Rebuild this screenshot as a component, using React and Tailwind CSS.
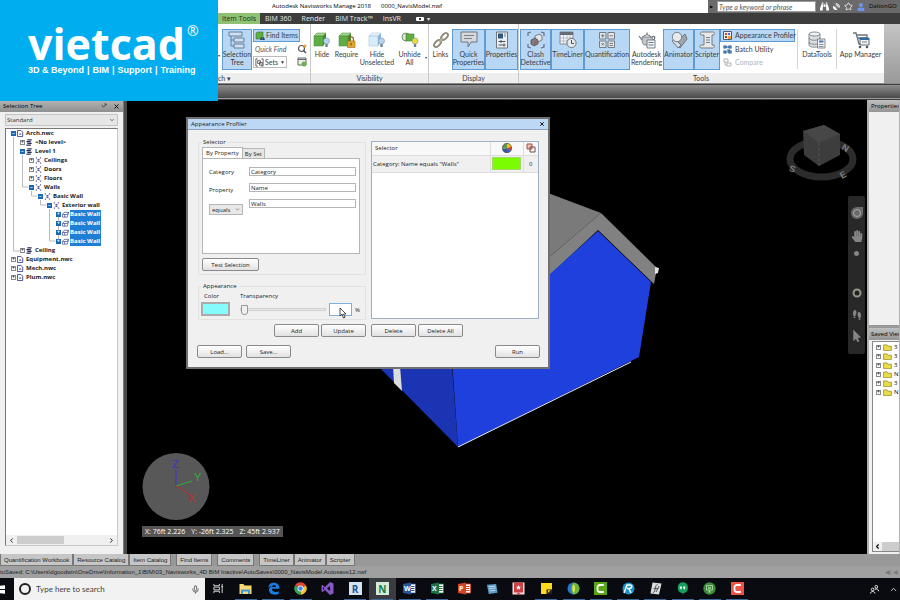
import React from "react";
import { ChevronDown, ChevronLeft, ChevronRight, ChevronUp, Mic, Star, X } from "lucide-react";
import { FaBinoculars, FaHandPaper, FaMousePointer, FaSatelliteDish, FaShoePrints, FaUser } from "react-icons/fa";

/* ---------- ribbon icons ---------- */

const Cube = ({ fill = "#5fae45", top = "#a4d98a", side = "#3f8530", children }) => (
  <svg viewBox="0 0 18 18" className="h-[18px] w-[18px]">
    <path d="M1 5l3-3h9l-3 3z" fill={top} stroke={side} strokeWidth=".5" />
    <path d="M10 5l3-3v9l-3 4z" fill={side} />
    <path d="M1 5h9v10H1z" fill={fill} stroke={side} strokeWidth=".5" />
    {children}
  </svg>
);

const Bulb = ({ x = 13.5, color = "#b5d4ee" }) => (
  <g>
    <circle cx={x} cy="10" r="3" fill={color} stroke="#7d93a8" strokeWidth=".6" />
    <path d={`M${x - 1.2} 13h2.4v3h-2.4z`} fill="#71808f" />
  </g>
);

const icons = {
  tree: (
    <svg viewBox="0 0 18 18" className="h-[18px] w-[18px]" fill="#cfdfee" stroke="#5c7690" strokeWidth=".9">
      <path d="M1 1h13v4H1zM6 7h10v4H6zM6 13h10v4H6z" />
      <path d="M3 5v10h3M3 9h3" fill="none" />
    </svg>
  ),
  hide: <Cube><Bulb /></Cube>,
  require: (
    <Cube>
      <path d="M11 10V8a2.200 2.200 0 0 1 4.400 0v2" fill="none" stroke="#8a6a1e" strokeWidth="1.200" />
      <path d="M9.500 10h7.500v6.500H9.500z" fill="#e3a532" stroke="#9a6c16" strokeWidth=".6" />
      <path d="M13 12v2.500" stroke="#5d4210" />
    </Cube>
  ),
  hideUn: <Cube fill="#d9ecfa" top="#eef7fd" side="#8fb8d8"><Bulb /></Cube>,
  unhide: (
    <svg viewBox="0 0 18 18" className="h-[18px] w-[18px]">
      <circle cx="5" cy="6" r="4" fill="#dfe7dc" stroke="#77916d" />
      <path d="M5 3h8v7H5z" fill="#5fae45" stroke="#3f8530" strokeWidth=".6" />
      <Bulb x={14} color="#f4d93c" />
    </svg>
  ),
  links: (
    <svg viewBox="0 0 18 18" className="h-[18px] w-[18px]" fill="none" stroke="#8b8371" strokeWidth="1.800">
      <ellipse cx="12.500" cy="5.500" rx="2.400" ry="4.200" transform="rotate(45 12.500 5.500)" />
      <ellipse cx="5.500" cy="12.500" rx="2.400" ry="4.200" transform="rotate(45 5.500 12.500)" />
      <path d="M7 11l4-4" stroke="#b9b19f" />
    </svg>
  ),
  quick: (
    <svg viewBox="0 0 18 18" className="h-[18px] w-[18px]">
      <path d="M1 1h16v10h-6l-3 5v-5H1z" fill="#d5d9de" stroke="#6f7680" />
      <path d="M4 4.500h10M4 7.500h8" stroke="#7b828c" />
    </svg>
  ),
  props: (
    <svg viewBox="0 0 18 18" className="h-[18px] w-[18px]">
      <path d="M3.500 1h11v16h-11z" fill="#eef1f4" stroke="#6f7680" />
      <path d="M5 2.500h5v5H5z" fill="#31577f" />
      <path d="M11 3h2M11 5h2" stroke="#7b828c" />
      <path d="M5.500 10.500h7M5.500 14h7M8 9v3M11 12.500v3" stroke="#4a525c" />
    </svg>
  ),
  clash: (
    <svg viewBox="0 0 18 18" className="h-[18px] w-[18px]">
      <path d="M1 5V2l3-1M14 1l3 1v3M1 13v3l3 1M14 17l3-1v-3" fill="none" stroke="#5f7184" strokeWidth="1.200" />
      <path d="M8 5l4-2 3 2v4l-4 2-3-2z" fill="#e4e6e8" stroke="#555" strokeWidth=".7" />
      <path d="M4 9l4-2 3 2v4l-4 2-3-2z" fill="#807c80" stroke="#444" strokeWidth=".7" />
      <path d="M7 11l4-2v4l-4 2z" fill="#8a6a68" />
    </svg>
  ),
  time: (
    <svg viewBox="0 0 18 18" className="h-[18px] w-[18px]">
      <path d="M1 1h13v12H1z" fill="#f2f4f6" stroke="#6f7680" strokeWidth=".8" />
      <path d="M1 1h13v3H1z" fill="#636c77" />
      <path d="M1 7h13M1 10h13M4.500 4v9M8 4v9M11 4v9" stroke="#9aa2ab" strokeWidth=".6" />
      <circle cx="12.500" cy="12" r="4.600" fill="#e6e9ec" stroke="#6f7680" />
      <path d="M12.500 9v3.500h2.500" fill="none" stroke="#4a525c" />
    </svg>
  ),
  quant: (
    <svg viewBox="0 0 18 18" className="h-[18px] w-[18px]" fill="#e3e6e9" stroke="#6b727b" strokeWidth=".9">
      <path d="M1.500 1.500h6.500v6.500H1.500zM10 1.500h6.500v6.500H10zM1.500 10h6.500v6.500H1.500zM10 10h6.500v6.500H10z" />
      <path d="M3 4.800h3.500M4.800 3v3.500M11.500 4.800h3.500M3.500 12l2.500 2.500M6 12l-2.500 2.500M11.500 12.500h3.500M11.500 14.500h3.500" />
    </svg>
  ),
  teapot: (
    <svg viewBox="0 0 18 18" className="h-[18px] w-[18px]">
      <path d="M4 6c0 7 1 8 4 8h3c3 0 4-3 3-8z" fill="#c3c6c9" stroke="#6b727b" strokeWidth=".8" />
      <path d="M5 6c2-3 6-3 8 0M9 3.500V1.500M4 9L1 5M14 6c3-2 4 1 1 4" fill="none" stroke="#6b727b" strokeWidth="1.200" />
      <path d="M9 9h8v8H9z" fill="#eef0f2" stroke="#5d646d" strokeWidth=".8" />
      <path d="M10.500 11.500h5M10.500 14h5" stroke="#77808a" />
    </svg>
  ),
  animator: (
    <svg viewBox="0 0 18 18" className="h-[18px] w-[18px]">
      <path d="M7 11l8-8 2 5-7 9z" fill="#9da5ae" stroke="#59616b" strokeWidth=".8" />
      <path d="M2 10l6 7 3-3-6-6z" fill="#d7dbe0" stroke="#59616b" strokeWidth=".8" />
      <circle cx="7" cy="6" r="4.700" fill="#e8eaed" stroke="#747c86" />
    </svg>
  ),
  scripter: (
    <svg viewBox="0 0 18 18" className="h-[18px] w-[18px]" fill="#e6e8ea" stroke="#6b727b" strokeWidth=".9">
      <path d="M4 1h11c2 0 2 3 0 3h-1v10h2c1 3-1 3-2 3H4c-3 0-3-3 0-3h2V4H4C1 4 2 1 4 1z" />
      <path d="M8 6.500h4M8 9h4M8 11.500h4" />
    </svg>
  ),
  data: (
    <svg viewBox="0 0 18 18" className="h-[18px] w-[18px]" stroke="#6b727b" strokeWidth=".8">
      <path d="M1 3v11c0 3 11 3 11 0V3" fill="#dcdfe2" />
      <ellipse cx="6.500" cy="3" rx="5.500" ry="2" fill="#eff1f3" />
      <path d="M1 7c0 3 11 3 11 0M1 11c0 3 11 3 11 0" fill="none" />
      <path d="M9.500 8h7.500v9H9.500z" fill="#f2f4f5" />
      <path d="M11 9.500h4.500v2H11z" fill="#4c7ba8" stroke="none" />
      <path d="M11 13.500h4.500M11 15.500h4.500" />
    </svg>
  ),
  app: (
    <svg viewBox="0 0 18 18" className="h-[18px] w-[18px]">
      <path d="M1 2h3l3 11h9M5 4h10v3H6" fill="none" stroke="#6b727b" strokeWidth="1.300" />
      <path d="M8 7h9v7H8z" fill="#f2f4f5" stroke="#3d4650" strokeWidth=".8" />
      <path d="M8 7h9v2H8z" fill="#2e6ca8" />
      <path d="M10 11h5" stroke="#77808a" />
      <circle cx="8" cy="16" r="1.300" fill="#555" />
      <circle cx="15" cy="16" r="1.300" fill="#555" />
    </svg>
  ),
};

const MiniCube = () => (
  <svg viewBox="0 0 10 10" className="h-[10px] w-[10px] shrink-0">
    <path d="M1 2l2-1h5v5l-2 2H1z" fill="#5fae45" stroke="#3f7030" strokeWidth=".6" />
    <path d="M5 9l1-3h1l.5 2L8 6h1l1 3z" fill="#35506e" />
  </svg>
);

const Big = ({ icon, lines, active, w }) => (
  <button
    className={`flex h-[41px] shrink-0 flex-col items-center border pt-px text-[7px] leading-[8px] ${w} ${
      active ? "border-[#5f9bd3] bg-[#b7d7f5]" : "border-transparent"
    }`}
  >
    {icons[icon]}
    <span className="mt-px flex flex-col whitespace-nowrap font-[Lato,sans-serif]">
      {lines.map((l) => (
        <span key={l}>{l}</span>
      ))}
    </span>
  </button>
);

const Group = ({ label, className = "", children }) => (
  <div className={`flex flex-col border-r border-[#c9c9c9] ${className}`}>
    <div className="flex h-[49px] items-start pt-[5px]">{children}</div>
    <div className="flex h-[10px] items-center justify-center bg-[#eeeeee] text-[7px] leading-none font-[Lato,sans-serif]">{label}</div>
  </div>
);

const tabs = ["BIM 360", "Render", "BIM Track™", "InsVR"];

const Ribbon = () => (
  <header className="h-[100px] shrink-0 bg-[#3d3d3d] text-[#3c3c3c]">
    <div className="flex h-[13px] items-center pl-[218px]">
      <div className="flex h-full w-[490px] items-center gap-[10px] bg-white pl-[54px] text-[6px] text-black">
        <span>Autodesk Navisworks Manage 2018</span>
        <span>0000_NavisModel.nwf</span>
      </div>
      <div className="flex h-full flex-1 items-center gap-[4px] overflow-hidden bg-[#6a6a6a] text-[6px] whitespace-nowrap text-white">
        <span className="ml-[2px] text-[4px] text-black">▶</span>
        <input
          aria-label="Search help"
          placeholder="Type a keyword or phrase"
          className="h-[11px] w-[99px] shrink-0 border border-[#999] bg-white px-px text-[7px] font-[Lato,sans-serif] italic leading-none placeholder:text-[#555]"
        />
        <FaBinoculars className="size-[9px] shrink-0" />
        <FaSatelliteDish className="size-[7px] shrink-0" />
        <Star className="size-[9px] shrink-0" />
        <FaUser className="size-[8px] shrink-0 text-[#6f93f0]" />
        <span className="text-black">DaltonGO</span>
      </div>
    </div>

    <nav className="flex h-[11px] items-center pl-[218px] text-[7px] leading-none text-[#e8e8e8]">
      <button className="h-full w-[42px] bg-[#8fc172] text-center whitespace-nowrap text-[#1e2b18]">Item Tools</button>
      <div className="ml-[5px] flex items-center gap-[10px]">
        {tabs.map((t) => (
          <button key={t}>{t}</button>
        ))}
      </div>
      <button aria-label="Ribbon display" className="ml-[15px] flex items-center gap-[3px] text-[6px]">
        <span className="flex h-[4px] w-[8px] items-center justify-center rounded-[1px] bg-white">
          <span className="size-[2px] bg-[#333]" />
        </span>
        ▾
      </button>
    </nav>

    <div className="flex h-[60px] border-b border-[#8b8b8b] bg-white pl-[218px]">
      <Group
        className="w-[93px] shrink-0"
        label={<span className="mr-auto">ch ▾</span>}
      >
        <span className="mt-[24px] w-[4px] shrink-0 text-[4px]">▾</span>
        <Big icon="tree" lines={["Selection", "Tree"]} active w="w-[30px]" />
        <div className="ml-px flex flex-1 flex-col text-[7px] leading-none font-[Lato,sans-serif]">
          <button className="flex h-[13px] w-[47px] items-center gap-px border border-[#5f9bd3] bg-[#b7d7f5] px-px whitespace-nowrap">
            <MiniCube /> Find Items
          </button>
          <div className="flex h-[14px] items-center justify-between pr-[3px]">
            <input
              aria-label="Quick Find"
              placeholder="Quick Find"
              className="w-[40px] px-[2px] italic placeholder:text-[#555]"
            />
            <svg viewBox="0 0 10 10" className="size-[10px]">
              <circle cx="4.500" cy="4.500" r="3" fill="#fff" stroke="#555" strokeWidth="1.200" />
              <path d="M6.500 6.500L9 9" stroke="#555" strokeWidth="1.500" />
              <circle cx="8" cy="2" r="1.500" fill="#f0a030" />
            </svg>
          </div>
          <div className="flex items-center justify-between pr-[3px]">
            <button className="flex h-[12px] w-[34px] items-center gap-px border border-[#bbb] px-px">
              <svg viewBox="0 0 10 10" className="size-[9px]" fill="none" stroke="#555">
                <path d="M3 1H1v8h2M7 1h2v8H7M3 3h3v3H3zM5 5h3v3H5z" />
              </svg>
              Sets
              <span className="ml-auto text-[5px]">▼</span>
            </button>
            <svg viewBox="0 0 10 10" className="size-[10px]">
              <path d="M1 1h8v7H1z" fill="#eee" stroke="#666" />
              <path d="M1 2.500h8" stroke="#666" />
              <circle cx="7" cy="7" r="2.500" fill="#6ab04c" />
            </svg>
          </div>
        </div>
      </Group>

      <Group className="w-[118px] shrink-0" label="Visibility">
        <Big icon="hide" lines={["Hide"]} w="w-[22px]" />
        <Big icon="require" lines={["Require"]} w="w-[27px]" />
        <Big icon="hideUn" lines={["Hide", "Unselected"]} w="w-[34px]" />
        <Big icon="unhide" lines={["Unhide", "All"]} w="w-[31px]" />
        <span className="mt-[26px] text-[4px]">▾</span>
      </Group>

      <Group className="w-[90px] shrink-0" label="Display">
        <Big icon="links" lines={["Links"]} w="w-[23px]" />
        <Big icon="quick" lines={["Quick", "Properties"]} active w="w-[33px]" />
        <Big icon="props" lines={["Properties"]} active w="w-[33px]" />
      </Group>

      <Group className="w-[365px] shrink-0 border-r-0" label={<span className="mr-px">Tools</span>}>
        <span className="w-px" />
        <Big icon="clash" lines={["Clash", "Detective"]} active w="w-[31px]" />
        <Big icon="time" lines={["TimeLiner"]} active w="w-[33px]" />
        <Big icon="quant" lines={["Quantification"]} active w="w-[46px]" />
        <Big icon="teapot" lines={["Autodesk", "Rendering"]} w="w-[33px]" />
        <Big icon="animator" lines={["Animator"]} active w="w-[31px]" />
        <Big icon="scripter" lines={["Scripter"]} active w="w-[26px]" />
        <div className="flex w-[78px] shrink-0 flex-col items-start border-r border-[#d5d5d5] text-[7px] leading-none font-[Lato,sans-serif] whitespace-nowrap">
          <button className="flex h-[13px] w-[75px] items-center gap-[3px] border border-[#5f9bd3] bg-[#b7d7f5] px-[2px]">
            <svg viewBox="0 0 9 9" className="size-[9px] shrink-0">
              <path d="M.5 .5h8v8h-8z" fill="#eee" stroke="#4e5a78" />
              <path d="M2 2h2v2H2z" fill="#d8442c" />
              <path d="M5 2h2v2H5z" fill="#3e78c8" />
              <path d="M2 5h2v2H2z" fill="#8a4a3a" />
              <path d="M5 5h3v3H5z" fill="#f0a030" />
            </svg>
            Appearance Profiler
          </button>
          <button className="flex h-[14px] items-center gap-[3px] px-[3px]">
            <svg viewBox="0 0 9 9" className="size-[9px]" fill="none" stroke="#1f5b96" strokeWidth="1.200">
              <path d="M1 1h2v2H1zM1 6h2v2H1zM6 1h2v2H6zM6 6h2v2H6zM3 2h3M4 7h2M4 5h3" />
            </svg>
            Batch Utility
          </button>
          <button disabled className="flex h-[13px] items-center gap-[3px] px-[3px] text-[#b4b4b4]">
            <svg viewBox="0 0 9 9" className="size-[9px]" fill="none" stroke="#b4b4b4">
              <path d="M1 1h4v3H1zM4 5h4v3H4zM2 4v3h2" />
            </svg>
            Compare
          </button>
        </div>
        <Big icon="data" lines={["DataTools"]} w="w-[38px]" />
        <span className="h-[40px] border-r border-[#d5d5d5]" />
        <Big icon="app" lines={["App Manager"]} w="w-[47px]" />
      </Group>
      <div className="flex-1 bg-gradient-to-b from-[#c4c4c4] to-[#9a9a9a]" />
    </div>
    <div className="mt-px h-[13px] bg-gradient-to-b from-[#8e8e8e] to-[#4a4a4a]" />
    <div className="h-px bg-[#9a9a9a]" />
  </header>
);

/* ---------- selection tree ---------- */

const rows = [
  { d: 0, t: "Arch.nwc", k: "file", open: true },
  { d: 1, t: "<No level>", k: "layer" },
  { d: 1, t: "Level 1", k: "layer", open: true },
  { d: 2, t: "Ceilings", k: "set" },
  { d: 2, t: "Doors", k: "set" },
  { d: 2, t: "Floors", k: "set" },
  { d: 2, t: "Walls", k: "set", open: true },
  { d: 3, t: "Basic Wall", k: "set", open: true },
  { d: 4, t: "Exterior wall", k: "set", open: true },
  { d: 5, t: "Basic Wall", k: "wall", sel: true },
  { d: 5, t: "Basic Wall", k: "wall", sel: true },
  { d: 5, t: "Basic Wall", k: "wall", sel: true },
  { d: 5, t: "Basic Wall", k: "wall", sel: true },
  { d: 1, t: "Ceiling", k: "layer" },
  { d: 0, t: "Equipment.nwc", k: "file" },
  { d: 0, t: "Mech.nwc", k: "file" },
  { d: 0, t: "Plum.nwc", k: "file" },
];

const treeIcons = {
  file: (
    <>
      <path d="M.5 .5h4l2 2v5h-6z" fill="#fff" stroke="#3b3b8c" />
      <path d="M2 5.500c1-3 3-2 3 0z" fill="#6a6ab8" />
    </>
  ),
  layer: <path d="M1.500 1h5M.5 3h5M1.500 5h5M.5 7h5" stroke="#2c2c5c" strokeWidth="1.200" />,
  set: (
    <>
      <path d="M1 1h1M6 1h1M3 3h2M3 5h2M1 7h1M6 7h1" stroke="#33337c" strokeWidth="1.500" />
      <path d="M1 1l5 6M6 1L1 7" stroke="#9a9ac8" strokeWidth=".5" />
    </>
  ),
  wall: <path d="M.5 4l2-2.500h5L6 7H.5zM.5 4H6l1.500-2.500M3 4v3" fill="#fff" stroke="#44448c" strokeWidth=".8" />,
};

const guideX = [8, 17, 26, 35, 44, 53];

const SelectionTree = () => (
  <aside className="flex w-[124px] shrink-0 flex-col border-r border-[#777] bg-[#f0f0f0]">
    <div className="flex h-[12px] items-center justify-between bg-gradient-to-b from-[#b5b5b5] to-[#8f8f8f] px-[3px] text-[6px] text-black">
      <span>Selection Tree</span>
      <span className="flex items-center gap-[6px]">
        <svg viewBox="0 0 7 7" className="size-[6px]" fill="none" stroke="#444">
          <path d="M1 2l2 3 3-4M4 1h2v2" />
        </svg>
        <X className="size-[7px]" strokeWidth={3} />
      </span>
    </div>
    <div className="mx-[5px] mt-[2px] flex h-[12px] items-center border border-[#c4c4c4] bg-[#e6e6e6]">
      <select aria-label="Tree mode" className="w-full appearance-none px-px text-[6px] leading-none text-[#333]">
        <option>Standard</option>
      </select>
      <ChevronDown className="mr-[2px] size-[6px] shrink-0" />
    </div>
    <div className="mx-[5px] mt-[2px] mb-[8px] flex flex-1 flex-col border border-[#c9c9c9] border-t-[#777] border-l-[#777] bg-white">
      <ul className="relative flex-1 text-[6px] font-bold leading-[9px] text-[#222]">
        <svg className="absolute top-0 left-0 h-[160px] w-[80px]" fill="none" stroke="#bbb">
          <path d="M7.500 8v114h6M16.500 26v32h6M25.500 62v5h6M34.500 71v5h6M43.500 80v32h6M52.500 84v28" />
        </svg>
        {rows.map((r, i) => (
          <li key={i} className="relative flex items-center">
            <span className="shrink-0" style={{ width: guideX[r.d] - 3 }} />
            <span
              className={`flex size-[5px] shrink-0 items-center justify-center border text-[5px] leading-none ${
                r.open || r.sel ? "border-[#1768b5] bg-[#1768b5] text-white" : "border-[#888] bg-white"
              }`}
            >
              {r.open ? "−" : "+"}
            </span>
            <svg viewBox="0 0 8 8" className="mx-px size-[7px] shrink-0">
              {treeIcons[r.k]}
            </svg>
            <span className={r.sel ? "bg-[#1f7fd6] pr-px text-white" : "pl-px"}>{r.t}</span>
          </li>
        ))}
      </ul>
      <div className="flex h-[10px] items-center bg-[#f0f0f0]">
        <ChevronLeft className="mx-[2px] size-[7px]" strokeWidth={3} />
        <span className="h-[8px] w-[47px] bg-[#cdcdcd]" />
        <ChevronRight className="mr-[2px] ml-auto size-[7px]" strokeWidth={3} />
      </div>
    </div>
  </aside>
);

/* ---------- appearance profiler window ---------- */

const Btn = ({ children, className = "w-[45px]" }) => (
  <button
    className={`h-[13px] rounded-[2px] border border-[#8a8a8a] bg-gradient-to-b from-white to-[#e2e2e2] text-[6px] leading-none ${className}`}
  >
    {children}
  </button>
);

const Field = ({ label, value }) => (
  <input aria-label={label} defaultValue={value} className="h-[9px] w-full border border-[#b5b5b5] bg-white px-px leading-none" />
);

const Profiler = () => (
  <section className="absolute top-[17px] left-[59px] w-[364px] border-2 border-[#707070] bg-[#f0f0f0] text-[6px] leading-[8px] text-[#1c1c1c]">
    <div className="flex h-[11px] items-center justify-between border-b border-[#8ba4c0] bg-[#bdd8f4] pr-[3px] pl-[3px]">
      <h2>Appearance Profiler</h2>
      <button aria-label="Close">
        <X className="size-[6px]" strokeWidth={4} />
      </button>
    </div>

    <div className="flex gap-[5px] pt-[8px] pr-[9px] pl-[10px]">
      <div className="w-[168px] shrink-0">
        <fieldset className="border border-[#e2e2e2] pr-[5px] pb-[3px] pl-[3px]">
          <legend className="px-px">Selector</legend>
          <div className="flex items-end pt-px">
            <button className="h-[11px] border border-b-0 border-[#b5b5b5] bg-white px-[3px]">By Property</button>
            <button className="h-[10px] border border-b-0 border-l-0 border-[#b5b5b5] bg-[#e6e6e6] px-[2px]">By Set</button>
          </div>
          <div className="grid h-[96px] grid-cols-[34px_1fr] content-start gap-x-[6px] border border-[#b5b5b5] bg-white pt-[8px] pr-[3px] pl-[6px]">
            <div className="flex flex-col items-start gap-[10px] pt-px">
              <span>Category</span>
              <span>Property</span>
              <span className="flex h-[11px] w-full items-center border border-[#b5b5b5] bg-[#e8e8e8]">
                <select aria-label="Condition" className="w-full appearance-none px-[2px] leading-none">
                  <option>equals</option>
                </select>
                <ChevronDown className="mr-[2px] size-[5px] shrink-0" />
              </span>
            </div>
            <div className="flex flex-col gap-[7px]">
              <Field label="Category" value="Category" />
              <Field label="Property" value="Name" />
              <Field label="Value" value="Walls" />
            </div>
          </div>
          <Btn className="mt-[4px] w-[57px]">Test Selection</Btn>
        </fieldset>

        <fieldset className="mt-[7px] border border-[#e2e2e2] px-[2px] pb-[3px]">
          <legend className="px-[2px]">Appearance</legend>
          <div className="flex h-[26px] items-end">
            <label className="flex w-[39px] flex-col gap-[2px]">
              <span className="pl-[3px]">Color</span>
              <button aria-label="Color" className="h-[14px] w-[29px] border-2 border-[#aaa] bg-[#84fbfd]" />
            </label>
            <label className="flex w-[89px] flex-col gap-[2px]">
              Transparency
              <input
                type="range"
                defaultValue="0"
                className="h-[14px] w-[86px] appearance-none bg-transparent [&::-webkit-slider-runnable-track]:h-[3px] [&::-webkit-slider-runnable-track]:border [&::-webkit-slider-runnable-track]:border-[#d0d0d0] [&::-webkit-slider-runnable-track]:bg-[#e8e8e8] [&::-webkit-slider-thumb]:-mt-[4px] [&::-webkit-slider-thumb]:h-[10px] [&::-webkit-slider-thumb]:w-[7px] [&::-webkit-slider-thumb]:appearance-none [&::-webkit-slider-thumb]:rounded-b-[3px] [&::-webkit-slider-thumb]:border [&::-webkit-slider-thumb]:border-[#999] [&::-webkit-slider-thumb]:bg-[#f0f0f0]"
              />
            </label>
            <span className="relative flex items-center gap-[3px]">
              <input aria-label="Transparency percent" className="h-[13px] w-[23px] border border-[#7db0dc] bg-white" />%
              <svg viewBox="0 0 8 12" className="absolute top-[4px] left-[10px] h-[12px] w-[8px]">
                <path d="M1 1v8l2-2 1.500 4 1.500-.7L4.500 7H7z" fill="#fff" stroke="#222" strokeWidth=".8" />
              </svg>
            </span>
          </div>
        </fieldset>
      </div>

      <div className="mt-[3px] mb-px flex-1 border border-[#9fb0c2] bg-white">
        <table className="w-full table-fixed border-collapse">
          <thead>
            <tr className="h-[13px] border-b border-[#ddd] bg-[#f8f8f8] text-left">
              <th className="pl-[3px] font-normal">Selector</th>
              <th className="w-[33px] border-x border-[#ddd]">
                <svg viewBox="0 0 10 10" className="mx-auto size-[10px]" aria-label="Color">
                  <path d="M5 5V0a5 5 0 0 1 4.300 7.500z" fill="#f2c230" />
                  <path d="M5 5l4.300 2.500A5 5 0 0 1 5 10z" fill="#3b62c4" />
                  <path d="M5 5v5A5 5 0 0 1 .3 6z" fill="#38589c" />
                  <path d="M5 5L.3 6A5 5 0 0 1 5 0z" fill="#5f9a4a" />
                  <path d="M5 5L9.800 4 9 7.500z" fill="#c8362c" />
                  <circle cx="5" cy="5" r="4.600" fill="none" stroke="#555" strokeWidth=".7" />
                </svg>
              </th>
              <th className="w-[15px]">
                <svg viewBox="0 0 10 10" className="mx-auto size-[10px]" fill="none" aria-label="Transparency">
                  <path d="M1 1h5v5H1z" fill="#f0c0b0" stroke="#a05040" />
                  <path d="M4 4h5v5H4z" stroke="#70504a" />
                </svg>
              </th>
            </tr>
          </thead>
          <tbody>
            <tr className="h-[17px] border-b border-[#ddd] bg-[#f0f0f0]">
              <td className="pl-px">Category: Name equals "Walls"</td>
              <td className="border-x border-[#ddd]">
                <div className="mx-auto h-[13px] w-[29px] border border-[#a9d66a] bg-[#7cfc00]" />
              </td>
              <td className="text-center">0</td>
            </tr>
          </tbody>
        </table>
      </div>
    </div>

    <div className="flex pt-[4px] pl-[86px]">
      <Btn>Add</Btn>
      <Btn className="ml-[2px] w-[45px]">Update</Btn>
      <Btn className="ml-[5px] w-[45px]">Delete</Btn>
      <Btn className="ml-[2px] w-[45px]">Delete All</Btn>
    </div>
    <div className="flex gap-[4px] pt-[8px] pr-[8px] pb-[9px] pl-[9px]">
      <Btn>Load...</Btn>
      <Btn>Save...</Btn>
      <Btn className="ml-auto w-[45px]">Run</Btn>
    </div>
  </section>
);

/* ---------- 3D view ---------- */

const View = () => (
  <main className="relative min-w-0 flex-1 overflow-hidden bg-black">
    <svg viewBox="127 100 740 454" preserveAspectRatio="xMidYMid slice" className="absolute inset-0 h-full w-full">
      {/* house */}
      <path d="M540 190l61 23-61 52z" fill="#7a7a7a" />
      <path d="M601 213l56 55-3 16-56-54-58 54v-19z" fill="#818181" />
      <path d="M655 267l4 1-1 5-3 1z" fill="#e4e4e4" />
      <path d="M598 231l53 51-12 75-181 90-6-87 88-77z" fill="#1f40dd" />
      <path d="M378 366h74l6 81z" fill="#1a34b4" />
      <path d="M393 366h7l2 25-8-8z" fill="#dcdcdc" />
      <path d="M458 447l173-85" stroke="#e6ecff" />
      {/* view cube */}
      <ellipse cx="821.500" cy="159" rx="31.500" ry="18" fill="none" stroke="#2c2c2c" strokeWidth="7" />
      <path d="M803 131l21-6 16 9v21l-21 11-15-11z" fill="#3d3d3d" />
      <path d="M803 131l21-6 16 9-21 9z" fill="#474747" />
      <path d="M819 143v23" stroke="#606060" strokeDasharray="3 2" strokeWidth=".6" />
      <g fill="#808080" fontFamily="Liberation Sans, sans-serif" fontWeight="bold" fontSize="9">
        <text x="789" y="172" transform="rotate(20 792 170)">S</text>
        <text x="840" y="178" transform="rotate(-30 843 175)">E</text>
        <text x="842" y="151" transform="rotate(30 845 148)">N</text>
      </g>
      {/* axes */}
      <circle cx="176" cy="486.500" r="33.500" fill="#585858" />
      <path d="M176 486v-16" stroke="#3a32c8" />
      <path d="M176 486l16-5" stroke="#2fae3a" />
      <path d="M176 486l14 9" stroke="#c22a2a" />
      <g fontFamily="Liberation Sans, sans-serif" fontSize="11">
        <text x="172" y="468" fill="#3a32c8">Z</text>
        <text x="194" y="481" fill="#2fae3a">Y</text>
        <text x="188" y="502" fill="#c22a2a">X</text>
      </g>
    </svg>

    <div className="absolute bottom-[17px] left-[15px] flex h-[11px] gap-[6px] bg-[#555] px-[3px] text-[7px] leading-[11px] text-white">
      <span>X: 76ft 2.226</span>
      <span>Y: -26ft 2.325</span>
      <span>Z: 45ft 2.937</span>
    </div>

    <div className="absolute top-[96px] right-[2px] flex h-[158px] w-[17px] flex-col items-center rounded-[2px] bg-[#282828] pt-[11px] text-[#858585]">
      <svg viewBox="0 0 12 12" className="size-[12px]" fill="none" stroke="#858585">
        <path d="M6 0h6v6a6 6 0 1 1-6-6z" fill="#6a6a6a" stroke="none" />
        <circle cx="6" cy="6" r="3.500" stroke="#aaa" />
      </svg>
      <FaHandPaper className="mt-[11px] size-[12px]" />
      <span className="mt-[9px] size-[5px] rounded-full bg-[#858585]" />
      <svg viewBox="0 0 10 10" className="mt-[32px] size-[10px]">
        <circle cx="5" cy="5" r="3.500" fill="#222" stroke="#96968a" strokeWidth="2" />
      </svg>
      <FaShoePrints className="mt-[12px] size-[10px] -rotate-90" />
      <FaMousePointer className="mt-[10px] size-[12px]" />
    </div>

    <Profiler />
  </main>
);

/* ---------- right dock ---------- */

const DockTitle = ({ children }) => (
  <div className="h-[12px] shrink-0 overflow-hidden bg-gradient-to-b from-[#c0c0c0] to-[#949494] pl-[2px] text-[6px] leading-[12px] whitespace-nowrap">
    {children}
  </div>
);

const saved = ["3", "3", "3", "N", "3", "N"];

const RightDock = () => (
  <aside className="flex w-[33px] shrink-0 flex-col border-r border-l-2 border-[#b0b0b0] bg-[#f0f0f0]">
    <DockTitle>Properties</DockTitle>
    <div className="h-[216px] border-b-[3px] border-[#999]" />
    <DockTitle>Saved Views</DockTitle>
    <div className="mt-px mb-[2px] ml-[3px] flex flex-1 flex-col border border-r-0 border-[#888] bg-white">
      <ul className="flex-1 pt-px text-[6px] leading-[9px]">
        {saved.map((s, i) => (
          <li key={i} className="flex items-center gap-[2px] pl-[3px]">
            <span className="flex size-[5px] items-center justify-center border border-[#888] text-[5px] leading-none">+</span>
            <svg viewBox="0 0 10 8" className="h-[7px] w-[9px] shrink-0">
              <path d="M.5 1h4l1 1.500h4v5h-9z" fill="#e9dc4a" stroke="#8d8420" strokeWidth=".8" />
            </svg>
            <span>{s}</span>
          </li>
        ))}
      </ul>
      <div className="flex h-[9px] items-center bg-[#cdcdcd]">
        <ChevronLeft className="h-full w-[9px] bg-[#f0f0f0] p-px" strokeWidth={4} />
      </div>
    </div>
  </aside>
);

/* ---------- bottom bars ---------- */

const tabGroups = [
  ["Quantification Workbook", "Resource Catalog", "Item Catalog"],
  ["Find Items"],
  ["Comments"],
  ["TimeLiner", "Animator", "Scripter"],
];

const DockTabs = () => (
  <div className="flex h-[12px] shrink-0 gap-[5px] bg-[#989898] text-[6px] leading-none font-['Liberation_Sans',sans-serif]">
    {tabGroups.map((g, i) => (
      <div key={i} className="flex">
        {g.map((t) => (
          <button key={t} className="border border-t-0 border-[#777] bg-[#c6c6c6] px-[3px] text-[#222]">
            {t}
          </button>
        ))}
      </div>
    ))}
  </div>
);

const Tile = ({ bg, fg = "text-white", children }) => (
  <span className={`flex size-[13px] items-center justify-center text-[10px] leading-none font-bold ${bg} ${fg}`}>
    {children}
  </span>
);

const Office = ({ color, letter }) => (
  <svg viewBox="0 0 13 13" className="size-[13px]">
    <path d="M6 2h6.500v9H6z" fill="#fff" stroke={color} strokeWidth=".8" />
    <path d="M8 4.500h3.500M8 6.500h3.500M8 8.500h3.500" stroke={color} />
    <path d="M0 2l8-1.500v12L0 11z" fill={color} />
    <text x="1" y="9" fontSize="7" fontWeight="bold" fill="#fff" fontFamily="Open Sans, sans-serif">
      {letter}
    </text>
  </svg>
);

const apps = [
  {
    name: "Task View",
    icon: (
      <svg viewBox="0 0 12 12" className="size-[11px]" fill="none" stroke="#ddd">
        <path d="M1 1v2h6V1M1 11V9h6v2M1 4.500h6v3H1zM10 1v10M9 4h2" />
      </svg>
    ),
  },
  {
    name: "Explorer",
    run: true,
    icon: (
      <svg viewBox="0 0 13 12" className="h-[12px] w-[13px]">
        <path d="M.5 1h4l1 1.500h7V11H.5z" fill="#f8d775" />
        <path d="M2 6.500h9V11H9V8.500H4V11H2z" fill="#3c9bd8" />
      </svg>
    ),
  },
  {
    name: "Edge",
    run: true,
    icon: (
      <svg viewBox="0 0 13 13" className="size-[13px]">
        <path d="M1 6C2 2 4 .8 7 .8c3.500 0 5.500 2.500 5.500 6H5c0 3.500 4 4 6.800 2.400v2.600C7 14 1.800 12 2 7.500 2.300 5.500 3.500 4.500 5 4 3.500 4 2 4.500 1 6zm4-1h4c0-2.800-4-2.800-4 0z" fill="#1a7ee0" />
      </svg>
    ),
  },
  {
    name: "Chrome",
    run: true,
    icon: (
      <svg viewBox="0 0 13 13" className="size-[13px]">
        <path d="M6.500 6.500L1.100 3.400a6.200 6.200 0 0 1 10.800 0z" fill="#e24535" />
        <path d="M6.500 6.500l5.400-3.100A6.200 6.200 0 0 1 6.500 12.700z" fill="#fbc727" />
        <path d="M6.500 6.500v6.200A6.200 6.200 0 0 1 1.100 3.400z" fill="#35a554" />
        <circle cx="6.500" cy="6.500" r="2.900" fill="#fff" />
        <circle cx="6.500" cy="6.500" r="2.200" fill="#4285f4" />
      </svg>
    ),
  },
  {
    name: "Visual Studio",
    icon: (
      <svg viewBox="0 0 13 13" className="size-[13px]">
        <path d="M9 0l3.500 1.500v10L9 13 4 8 1.500 10 .5 9.500v-6L1.500 3 4 5zM9 4L6 6.500 9 9zM2 5v3l1.500-1.500z" fill="#8658c4" fillRule="evenodd" />
      </svg>
    ),
  },
  { name: "Revit", run: true, icon: <Tile bg="bg-[#d4e3f1]" fg="text-[#1c5598]">R</Tile> },
  { name: "Navisworks", run: true, active: true, icon: <Tile bg="bg-[#d5eadb]" fg="text-[#138044]">N</Tile> },
  { name: "Word", run: true, icon: <Office color="#2a5699" letter="W" /> },
  { name: "Excel", run: true, icon: <Office color="#207245" letter="X" /> },
  { name: "PowerPoint", icon: <Office color="#d04525" letter="P" /> },
  {
    name: "Notes",
    icon: (
      <svg viewBox="0 0 13 13" className="size-[12px]">
        <path d="M1 2l10-1 1.500 9.500L3 12z" fill="#5d9cc4" />
        <path d="M3 4l7-.7M3.500 6l7-.7M4 8.500l6-.6" stroke="#bfe0f2" />
      </svg>
    ),
  },
  {
    name: "Reader",
    icon: (
      <svg viewBox="0 0 13 13" className="size-[13px]">
        <path d="M.5 .5h12v12H.5z" fill="#f3dcdc" />
        <path d="M2 .5h9v10H2z" fill="#cf3d44" />
        <path d="M4 12.500l2.500-2 2.500 2z" fill="#cf3d44" />
        <path d="M6.500 3l.8 1.700h1.700L7.700 6l.5 1.800-1.700-1-1.700 1L5.300 6 4 4.700h1.700z" fill="#fff" />
      </svg>
    ),
  },
  {
    name: "Sticky Notes",
    run: true,
    icon: (
      <svg viewBox="0 0 12 12" className="size-[11px]">
        <path d="M0 0h12v12H0z" fill="#fddb1c" />
        <path d="M6 7h6v5H6z" fill="#222" />
        <path d="M7.500 11l3-3H7.500z" fill="#fddb1c" />
      </svg>
    ),
  },
  {
    name: "Globe",
    run: true,
    icon: (
      <svg viewBox="0 0 13 13" className="size-[13px]">
        <circle cx="6.500" cy="6.500" r="6" fill="#2a78cc" />
        <path d="M6.500 .5a6 6 0 0 1 0 12C3.500 9 3.500 4 6.500 .5z" fill="#71b52e" />
        <path d="M6.500 2c2 2 2 7 0 9-1.500-3-1.500-6 0-9z" fill="#e1e65a" />
      </svg>
    ),
  },
  {
    name: "Camtasia",
    run: true,
    icon: (
      <svg viewBox="0 0 13 13" className="size-[13px]">
        <path d="M0 0h13v13H0z" fill="#58a618" />
        <path d="M9.800 3H6a2.500 2.500 0 0 0-2.500 2.500v2A2.500 2.500 0 0 0 6 10h3.800" fill="none" stroke="#fff" strokeWidth="1.800" />
      </svg>
    ),
  },
  {
    name: "Revu",
    run: true,
    icon: (
      <svg viewBox="0 0 13 13" className="size-[13px]">
        <circle cx="6.500" cy="6.500" r="6" fill="#1893d1" />
        <path d="M2 11L5 3h3c3 0 2 3.500-1 3.500H5M7 7l2 4" fill="none" stroke="#fff" strokeWidth="1.500" />
      </svg>
    ),
  },
  {
    name: "Script",
    run: true,
    icon: (
      <svg viewBox="0 0 13 13" className="size-[13px]">
        <path d="M3.500 .5l9 1-2.500 11-8.500-1z" fill="#dcdcdc" />
        <path d="M8.500 2.500c-3 0-1.500 8-4.500 8M4.500 6.500h5M7 10l3-6" stroke="#555" fill="none" />
      </svg>
    ),
  },
  {
    name: "Hangouts",
    run: true,
    icon: (
      <svg viewBox="0 0 13 13" className="size-[13px]">
        <path d="M6.500 .3a5.500 5.500 0 0 1 1 10.900L6.500 13v-1.800A5.500 5.500 0 0 1 6.500 .3z" fill="#159f5d" />
        <path d="M3.800 4.500h2v2l-1 1.500v-1.500h-1zM7.200 4.500h2v2l-1 1.500v-1.500h-1z" fill="#fff" />
      </svg>
    ),
  },
  {
    name: "Remote",
    run: true,
    icon: (
      <svg viewBox="0 0 13 13" className="size-[13px]">
        <circle cx="6.500" cy="6.500" r="6.200" fill="#3c8c38" />
        <path d="M3.500 3.500h6v4.500h-6zM5 10h3M6.500 8v2M5 5l3 2M8 5L5 7" fill="none" stroke="#b7dcb4" strokeWidth=".8" />
      </svg>
    ),
  },
  {
    name: "Recorder",
    run: true,
    icon: (
      <svg viewBox="0 0 13 13" className="size-[13px]">
        <path d="M0 0h13v13H0z" fill="#ee5347" />
        <path d="M9.800 3H6a2.500 2.500 0 0 0-2.500 2.500v2A2.500 2.500 0 0 0 6 10h3.800" fill="none" stroke="#fff" strokeWidth="1.800" />
      </svg>
    ),
  },
];

const Taskbar = () => (
  <footer className="flex h-[22px] shrink-0 items-stretch bg-[#0a0b10]">
    <button aria-label="Start" className="flex w-[14px] items-center">
      <svg viewBox="0 0 6 9" className="h-[9px] w-[6px]" fill="#fff">
        <path d="M0 .8l5-.6V4H0zM0 5h5v3.800L0 8.200z" />
      </svg>
    </button>
    <label className="flex w-[191px] items-center gap-[5px] bg-[#f2f2f2] px-[5px]">
      <span className="size-[12px] shrink-0 rounded-full border-2 border-[#222]" />
      <input
        aria-label="Search"
        placeholder="Type here to search"
        className="min-w-0 flex-1 text-[8px] font-[Lato,sans-serif] placeholder:text-[#444]"
      />
      <Mic className="size-[9px] shrink-0 text-[#444]" />
    </label>
    <div className="flex w-[546px]">
      {apps.map((a) => (
        <button
          key={a.name}
          aria-label={a.name}
          className={`flex flex-1 items-center justify-center ${a.active ? "bg-[#3a3c42]" : ""}`}
        >
          <span className={`flex h-full w-[22px] items-center justify-center border-b ${a.run ? "border-[#3f6aa0]" : "border-transparent"}`}>
            {a.icon}
          </span>
        </button>
      ))}
    </div>
    <div className="ml-auto flex items-center gap-[10px] pr-[2px] text-white">
      <svg viewBox="0 0 10 10" className="size-[9px]" fill="none" stroke="#fff">
        <circle cx="3" cy="5" r="1.500" />
        <circle cx="7" cy="2" r="1.500" />
        <path d="M.5 9.500c0-3 5-3 5 0M5.500 5c1.500-1.500 4-.5 4 2" />
      </svg>
      <ChevronUp className="size-[9px]" />
    </div>
  </footer>
);

const Logo = () => (
  <div className="absolute top-0 left-0 flex h-[101px] w-[218px] flex-col items-start bg-[#00aeef] pt-[22px] pl-[28px] text-white">
    <h1 className="flex text-[43px] leading-[43px] font-bold">
      vietcad
      <span className="pl-[2px] text-[14px] leading-[18px] font-normal">®</span>
    </h1>
    <p className="flex gap-[3px] text-[9px] leading-[10px] font-bold whitespace-nowrap font-['Liberation_Sans',sans-serif]">
      <span>3D &amp; Beyond</span>
      <span>|</span>
      <span>BIM</span>
      <span>|</span>
      <span>Support</span>
      <span>|</span>
      <span>Training</span>
    </p>
  </div>
);

const App = () => {
  return (
    <div className="relative flex h-screen flex-col overflow-hidden bg-[#989898] font-['Open_Sans',sans-serif]">
      <Ribbon />
      <div className="flex min-h-0 flex-1 bg-[#8a8a8a]">
        <SelectionTree />
        <span className="w-[3px] shrink-0 bg-[#4a4a4a]" />
        <View />
        <RightDock />
      </div>
      <DockTabs />
      <div className="flex h-[12px] shrink-0 items-center justify-between bg-[#a0a0a0] text-[6px] whitespace-nowrap text-[#222] font-['Liberation_Sans',sans-serif]">
        <span>toSaved: C:\Users\dgoodwin\OneDrive\Information_1\BIM\03_Navisworks_4D BIM Inactive\AutoSaves\0000_NavisModel.Autosave12.nwf</span>
        <span className="pr-[2px] text-[#777]">◀| ◀</span>
      </div>
      <Taskbar />
      <Logo />
    </div>
  );
};

export default App;
